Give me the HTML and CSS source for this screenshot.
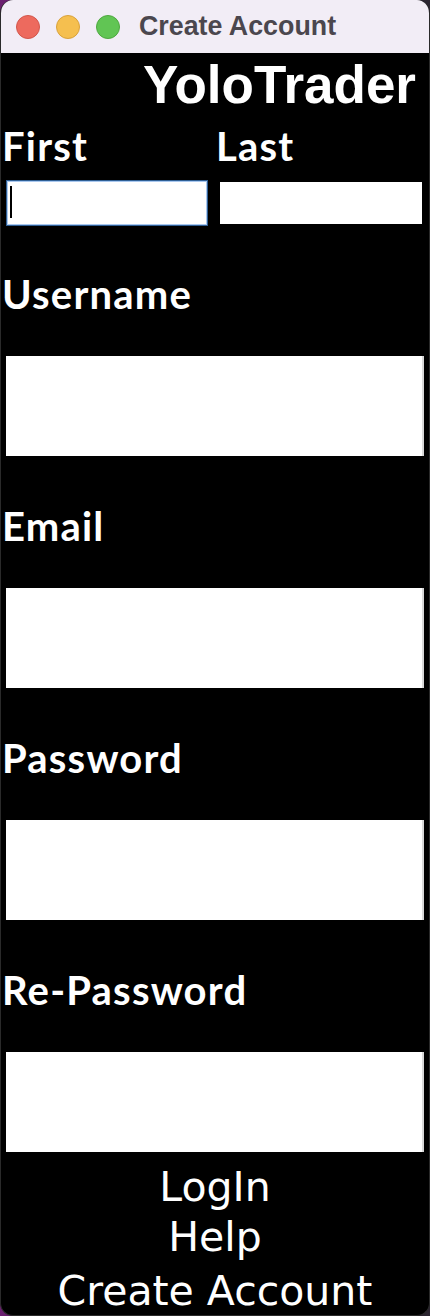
FILE: index.html
```html
<!DOCTYPE html>
<html lang="en">
<head>
<meta charset="utf-8">
<title>Create Account</title>
<link rel="stylesheet" href="styles.css">
</head>
<body>
<div class="window">
  <header class="titlebar">
    <div class="lights">
      <span class="light light-red"></span>
      <span class="light light-yellow"></span>
      <span class="light light-green"></span>
    </div>
    <div class="window-title">Create Account</div>
  </header>
  <main class="content">
    <h1 class="brand">YoloTrader</h1>
    <div class="name-row">
      <div class="name-col">
        <label class="label">First</label>
        <div class="input input-small input-first is-focused"><span class="caret"></span></div>
      </div>
      <div class="name-col">
        <label class="label">Last</label>
        <div class="input input-small input-last"></div>
      </div>
    </div>
    <div class="field">
      <label class="label">Username</label>
      <div class="input input-large"></div>
    </div>
    <div class="field">
      <label class="label">Email</label>
      <div class="input input-large"></div>
    </div>
    <div class="field">
      <label class="label">Password</label>
      <div class="input input-large"></div>
    </div>
    <div class="field">
      <label class="label">Re-Password</label>
      <div class="input input-large"></div>
    </div>
    <nav class="links">
      <a class="link">LogIn</a>
      <a class="link">Help</a>
      <a class="link link-create">Create Account</a>
    </nav>
  </main>
</div>
</body>
</html>
```

FILE: styles.css
```css
html, body {
  margin: 0;
  padding: 0;
}

body {
  width: 430px;
  height: 1316px;
  overflow: hidden;
  background: linear-gradient(to right, #6b1f70 0%, #3b2342 25%, #2b2530 100%);
}

.window {
  width: 430px;
  height: 1316px;
  box-sizing: border-box;
  border-radius: 13px;
  overflow: hidden;
  background: #000;
  display: flex;
  flex-direction: column;
  border: 1px solid #2a2a2a;
  border-top: none;
}

.titlebar {
  height: 53px;
  flex: 0 0 53px;
  background: #f2edf6;
  display: flex;
  align-items: center;
  position: relative;
}

.lights {
  display: flex;
  gap: 16px;
  padding-left: 15px;
}

.light {
  width: 24px;
  height: 24px;
  border-radius: 50%;
  box-sizing: border-box;
}

.light-red { background: #ed6a5e; border: 1px solid #d2574c; }
.light-yellow { background: #f5bf4f; border: 1px solid #d9a23c; }
.light-green { background: #61c554; border: 1px solid #4fa840; }

.window-title {
  margin-left: 19px;
  font-family: "Liberation Sans", Arial, sans-serif;
  font-weight: bold;
  font-size: 26.8px;
  color: #4b474e;
}

.content {
  flex: 1;
  display: flex;
  flex-direction: column;
  color: #fff;
}

.brand {
  margin: 0;
  padding: 3px 13px 0 0;
  text-align: right;
  font-family: "Liberation Sans", Arial, sans-serif;
  font-weight: bold;
  font-size: 53px;
  line-height: 58px;
  height: 58px;
}

.label {
  display: block;
  margin-left: 1px;
  font-family: Lato, "Open Sans", sans-serif;
  font-weight: bold;
  font-size: 40px;
  letter-spacing: 1.2px;
  line-height: 41px;
  height: 44px;
  color: #fff;
}

.name-row {
  margin-top: 12px;
  display: grid;
  grid-template-columns: 214px 1fr;
}

.name-col {
  display: flex;
  flex-direction: column;
  gap: 12px;
}

.input {
  background: #fff;
  box-sizing: border-box;
}

.input-small {
  height: 42px;
}

.input-first {
  margin-left: 7px;
  width: 198px;
  position: relative;
}

.input-last {
  margin-left: 5px;
  width: 202px;
}

.is-focused {
  box-shadow: 0 0 0 1px #a9c8ef, 0 0 0 2px #2f5f95;
}

.caret {
  position: absolute;
  left: 2px;
  top: 4px;
  width: 2px;
  height: 32px;
  background: #000;
}

.field {
  margin-top: 50px;
  display: flex;
  flex-direction: column;
  gap: 38px;
}

.input-large {
  margin-left: 5px;
  width: 418px;
  height: 100px;
  border-right: 2px solid #d8d8d8;
}

.links {
  margin-top: 10px;
  display: flex;
  flex-direction: column;
  align-items: center;
  font-family: "DejaVu Sans", Verdana, sans-serif;
  font-size: 41px;
  line-height: 50px;
}

.link {
  color: #fff;
  text-decoration: none;
}

.link-create {
  margin-top: 4px;
}
```
